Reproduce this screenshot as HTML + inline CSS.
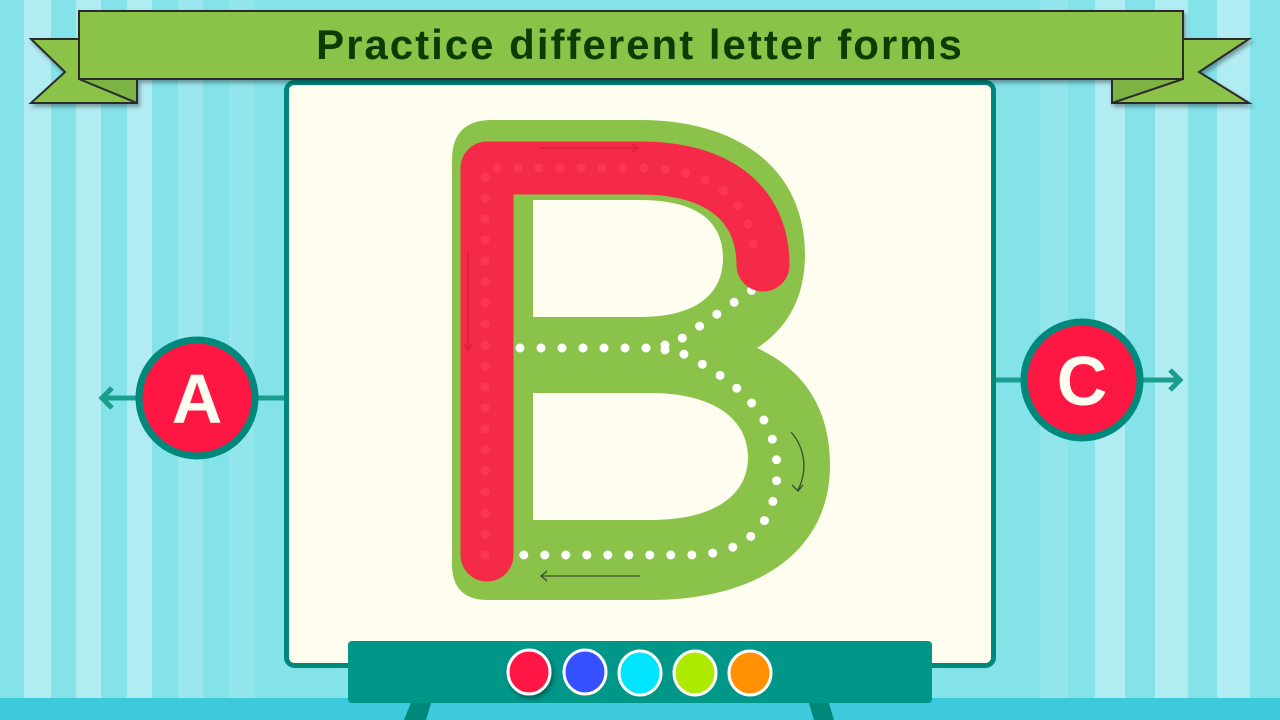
<!DOCTYPE html>
<html><head><meta charset="utf-8"><style>
html,body{margin:0;padding:0;width:1280px;height:720px;overflow:hidden;background:#84e2e9}
svg{display:block}
</style></head><body>
<svg width="1280" height="720" viewBox="0 0 1280 720" xmlns="http://www.w3.org/2000/svg">
<defs>
<filter id="sh" x="-10%" y="-10%" width="130%" height="140%"><feDropShadow dx="2" dy="3" stdDeviation="2" flood-color="#000" flood-opacity="0.35"/></filter>
</defs>
<rect width="1280" height="720" fill="#84e2e9"/>
<g fill="#b1ecf3">
<rect x="24" y="0" width="27" height="720"/>
<rect x="76" y="0" width="25" height="720"/>
<rect x="127" y="0" width="25" height="720"/>
<rect x="178" y="0" width="25" height="720" opacity="0.5"/>
<rect x="229" y="0" width="25" height="720" opacity="0.3"/>
<rect x="1095" y="0" width="30" height="720"/>
<rect x="1155" y="0" width="33" height="720"/>
<rect x="1217" y="0" width="33" height="720"/>
<rect x="1040" y="0" width="28" height="720" opacity="0.3"/>
</g>
<rect x="0" y="698" width="1280" height="22" fill="#3ccadc"/>
<line x1="104" y1="398" x2="286" y2="398" stroke="#1a9e8f" stroke-width="5"/>
<path d="M112,388 L102,398 L112,408" fill="none" stroke="#1a9e8f" stroke-width="5"/>
<line x1="994" y1="380" x2="1178" y2="380" stroke="#1a9e8f" stroke-width="5"/>
<path d="M1170,370 L1180,380 L1170,390" fill="none" stroke="#1a9e8f" stroke-width="5"/>
<rect x="286.5" y="82.5" width="707" height="583" rx="8" fill="#fffdf0" stroke="#00897b" stroke-width="5"/>
<path fill-rule="evenodd" fill="#8bc34a" d="M492,120 H640 C740,120 805,170 805,255 C805,300 785,330 757,348 C805,370 830,410 830,465 C830,550 760,600 650,600 H488 Q452,600 452,564 V160 Q452,120 492,120 Z M533,200 H640 C695,200 723,220 723,258 C723,295 695,317 640,317 H533 Z M533,393 H650 C715,393 748,420 748,457 C748,495 715,520 650,520 H533 Z"/>
<path d="M520,348 H665 M665,350 L752,290 M665,345 C730,375 777,410 777,470 C777,530 740,555 690,555 H515" fill="none" stroke="#fff" stroke-width="9" stroke-linecap="round" stroke-dasharray="0 21"/>
<path d="M487,555 V168 H640 C720,168 763,205 763,265" fill="none" stroke="#f42a48" stroke-width="53" stroke-linecap="round" stroke-linejoin="round"/>
<path d="M485,555 V168 H640 C720,168 755,205 755,265" fill="none" stroke="#ff3a5c" stroke-width="9" stroke-linecap="round" stroke-dasharray="0 21" opacity="0.8"/>
<path d="M540,148 H638 M632,144 L638,148 L632,152" fill="none" stroke="#d81b3a" stroke-width="1.2"/>
<path d="M468,252 V350 M464,344 L468,350 L472,344" fill="none" stroke="#d81b3a" stroke-width="1.2"/>
<path d="M640,576 H541 M547,571 L541,576 L547,581" fill="none" stroke="#3a4a30" stroke-width="1.3"/>
<path d="M791,432 C805,448 808,470 798,490 M792,485 L798,491 L803,485" fill="none" stroke="#3a4a30" stroke-width="1.3"/>
<path d="M412,700 L404,720 H426 L432,700 Z M808,700 L814,720 H834 L828,700 Z" fill="#00897b"/>
<rect x="348" y="641" width="584" height="62" rx="4" fill="#009688"/>
<ellipse cx="529" cy="672" rx="21" ry="22" fill="#ff1744" stroke="#fff" stroke-width="3" filter="url(#sh)"/>
<ellipse cx="585" cy="672" rx="21" ry="22" fill="#3550ff" stroke="#fff" stroke-width="3"/>
<ellipse cx="640" cy="673" rx="21" ry="22" fill="#00e5ff" stroke="#fff" stroke-width="3"/>
<ellipse cx="695" cy="673" rx="21" ry="22" fill="#aeea00" stroke="#fff" stroke-width="3"/>
<ellipse cx="750" cy="673" rx="21" ry="22" fill="#ff9100" stroke="#fff" stroke-width="3"/>
<circle cx="197" cy="398" r="58" fill="#ff1744" stroke="#00897b" stroke-width="7"/>
<text x="197" y="423" text-anchor="middle" font-family="Liberation Sans, sans-serif" font-weight="bold" font-size="70" fill="#fffdf0">A</text>
<circle cx="1082" cy="380" r="58" fill="#ff1744" stroke="#00897b" stroke-width="7"/>
<text x="1082" y="405" text-anchor="middle" font-family="Liberation Sans, sans-serif" font-weight="bold" font-size="70" fill="#fffdf0">C</text>
<g filter="url(#sh)" stroke="#2b2b2b" stroke-width="2" stroke-linejoin="miter">
<path d="M31,39 H137 V103 H31 L65,72 Z" fill="#8bc34a"/>
<path d="M1249,39 H1112 V103 H1249 L1199,72 Z" fill="#8bc34a"/>
<path d="M79,79 L137,103 V79 Z" fill="#7cb342"/>
<path d="M1183,79 L1112,103 V79 Z" fill="#7cb342"/>
<rect x="79" y="11" width="1104" height="68" fill="#8bc34a"/>
</g>
<text x="640" y="59" text-anchor="middle" font-family="Liberation Sans, sans-serif" font-weight="bold" font-size="42" letter-spacing="2" fill="#0b3d02">Practice different letter forms</text>
</svg>
</body></html>
